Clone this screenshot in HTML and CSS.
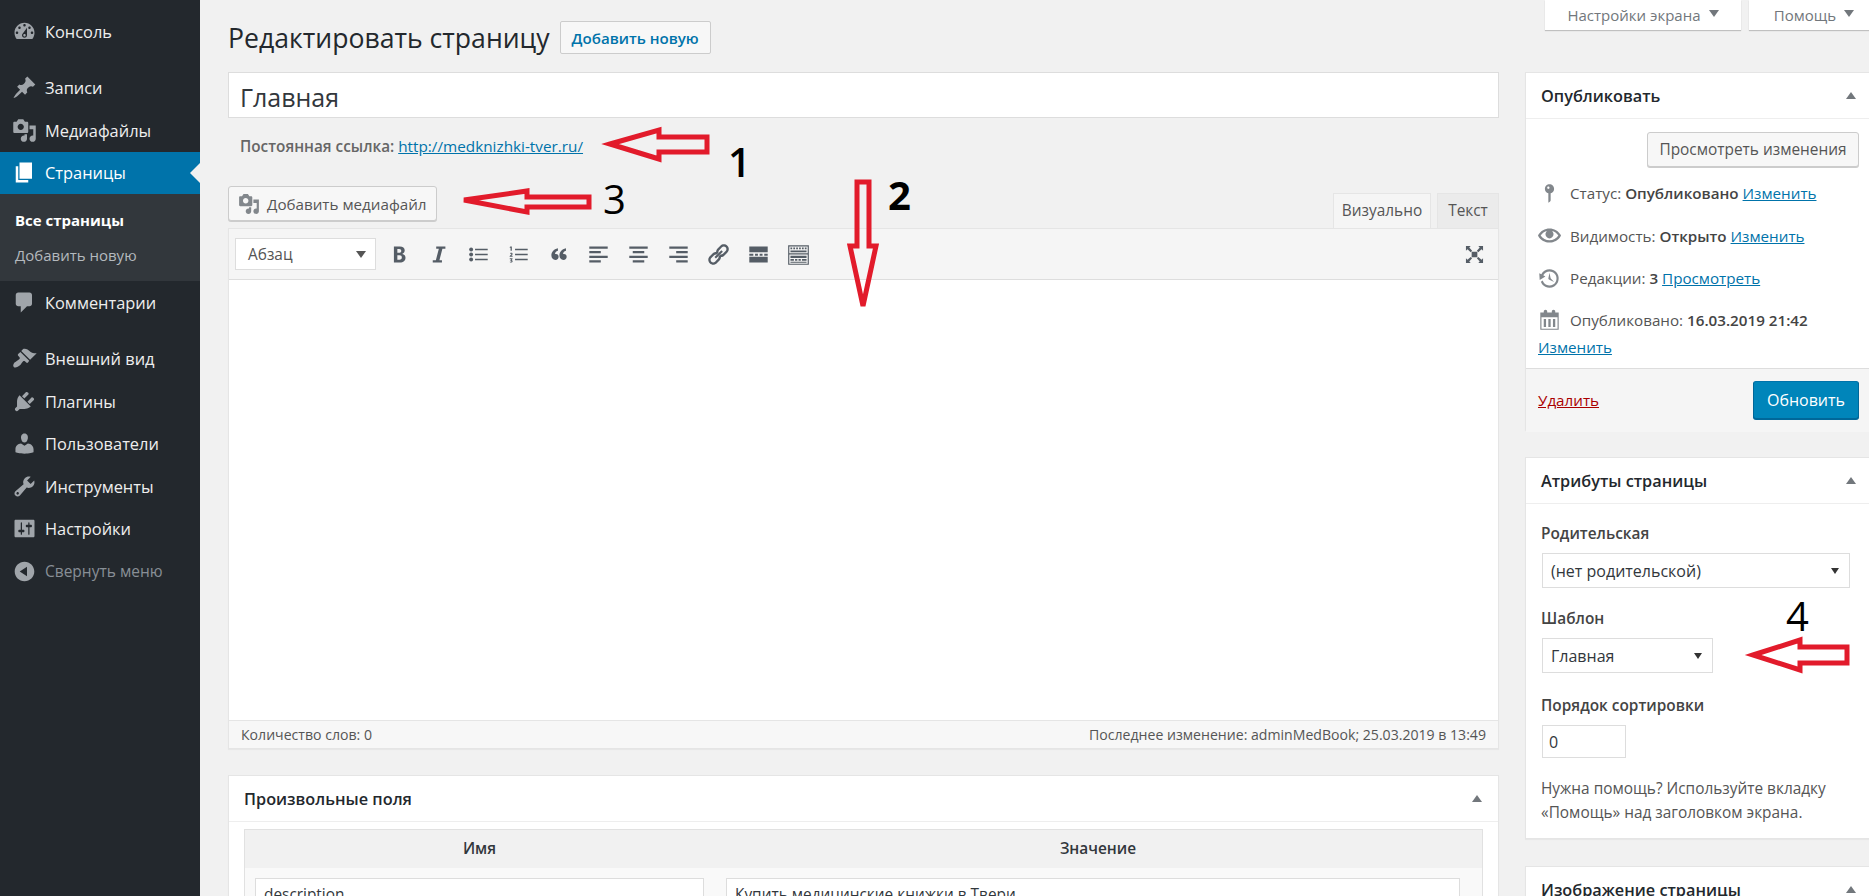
FILE: index.html
```html
<!DOCTYPE html>
<html lang="ru">

<head>
    <meta charset="UTF-8">
    <title>Редактировать страницу</title>
    <link rel="stylesheet" href="styles.css">
</head>

<body>
    <svg class="sprite" xmlns="http://www.w3.org/2000/svg">
        <symbol id="i-media" viewBox="0 0 20 20"><path d="M13 11V4c0-.55-.45-1-1-1h-1.67L9 1H5L3.67 3H2c-.55 0-1 .45-1 1v7c0 .55.45 1 1 1h10c.55 0 1-.45 1-1zM7 4.5c1.38 0 2.5 1.12 2.5 2.5S8.38 9.5 7 9.5 4.5 8.38 4.5 7 5.62 4.5 7 4.5zM14 6h5v10.5c0 1.38-1.12 2.5-2.5 2.5S14 17.88 14 16.5s1.12-2.5 2.5-2.5c.17 0 .34.02.5.05V9h-3V6zm-4 8.05V13h2v3.5c0 1.38-1.12 2.5-2.5 2.5S7 17.88 7 16.5 8.12 14 9.5 14c.17 0 .34.02.5.05z"/></symbol>
    </svg>

    <div class="page">
        <nav class="sidebar">
            <a class="menu-item"><svg class="menu-icon" viewBox="0 0 20 20"><path d="M3.76 16h12.48c1.1-1.37 1.76-3.11 1.76-5 0-4.42-3.58-8-8-8s-8 3.58-8 8c0 1.89.66 3.63 1.76 5zM10 4c.55 0 1 .45 1 1s-.45 1-1 1-1-.45-1-1 .45-1 1-1zM6 6c.55 0 1 .45 1 1s-.45 1-1 1-1-.45-1-1 .45-1 1-1zm8 0c.55 0 1 .45 1 1s-.45 1-1 1-1-.45-1-1 .45-1 1-1zm-5.37 5.55L12 7v6c0 1.1-.9 2-2 2s-2-.9-2-2c0-.57.24-1.08.63-1.45zM4 10c.55 0 1 .45 1 1s-.45 1-1 1-1-.45-1-1 .45-1 1-1zm12 0c.55 0 1 .45 1 1s-.45 1-1 1-1-.45-1-1 .45-1 1-1zm-5 3c0-.55-.45-1-1-1s-1 .45-1 1 .45 1 1 1 1-.45 1-1z"/></svg>Консоль</a>
            <a class="menu-item after-sep"><svg class="menu-icon" viewBox="0 0 20 20"><path d="M10.44 3.02l1.82-1.82 6.36 6.35-1.83 1.82c-1.05-.68-2.48-.57-3.41.36l-.75.75c-.92.93-1.04 2.35-.35 3.41l-1.83 1.82-2.41-2.41-2.8 2.79c-.42.42-3.38 2.71-3.8 2.29s1.86-3.39 2.28-3.81l2.79-2.79L4.1 9.36l1.83-1.82c1.05.69 2.48.57 3.4-.36l.75-.75c.93-.92 1.05-2.35.36-3.41z"/></svg>Записи</a>
            <a class="menu-item"><svg class="menu-icon"><use href="#i-media"/></svg>Медиафайлы</a>
            <a class="menu-item current"><svg class="menu-icon" viewBox="0 0 20 20"><path d="M6 15V2h10v13H6zm-1 1h8v2H3V5h2v11z"/></svg>Страницы</a>
            <div class="submenu">
                <a class="sub-item active">Все страницы</a>
                <a class="sub-item">Добавить новую</a>
            </div>
            <a class="menu-item"><svg class="menu-icon" viewBox="0 0 20 20"><path d="M5 2h9c1.1 0 2 .9 2 2v7c0 1.1-.9 2-2 2h-2l-5 5v-5H5c-1.1 0-2-.9-2-2V4c0-1.1.9-2 2-2z"/></svg>Комментарии</a>
            <a class="menu-item after-sep"><svg class="menu-icon" viewBox="0 0 20 20"><path d="M14.48 11.06L7.41 3.99l1.5-1.5c.5-.56 2.3-.47 3.51.32 1.21.8 1.43 1.28 2.91 2.1 1.18.64 2.45 1.26 4.45.85zm-.71.71L6.7 4.7 4.93 6.47c-.39.39-.39 1.02 0 1.41l1.06 1.06c.39.39.39 1.03 0 1.42-.6.6-1.43 1.11-2.21 1.69-.35.26-.7.53-1.01.84C1.43 13.23.4 15.8 1.43 16.83s3.6-.03 4.95-1.37c.31-.31.58-.66.85-1.02.57-.78 1.08-1.61 1.69-2.21.39-.39 1.02-.39 1.41 0l1.06 1.06c.39.39 1.02.39 1.41 0z"/></svg>Внешний вид</a>
            <a class="menu-item"><svg class="menu-icon" viewBox="0 0 20 20"><path d="M13.11 4.36L9.87 7.6 8 5.73l3.24-3.24c.35-.34 1.05-.2 1.56.32.52.51.66 1.21.31 1.55zm-8 1.77l.91-1.12 9.01 9.01-1.19.84c-.71.71-2.63 1.16-3.82 1.16H6.14L4.9 17.26c-.59.59-1.54.59-2.12 0-.59-.58-.59-1.53 0-2.12l1.24-1.24v-3.88c0-1.13.4-3.19 1.09-3.89zm7.26 3.97l3.24-3.24c.34-.35 1.04-.21 1.55.31.52.51.66 1.21.31 1.55l-3.24 3.25z"/></svg>Плагины</a>
            <a class="menu-item"><svg class="menu-icon" viewBox="0 0 20 20"><path d="M10 9.25c-2.27 0-2.73-3.44-2.73-3.44C7 4.02 7.82 2 9.97 2c2.16 0 2.98 2.02 2.71 3.81 0 0-.41 3.44-2.68 3.44zm0 2.57L12.72 10c2.39 0 4.52 2.33 4.52 4.53v2.49s-3.65 1.13-7.24 1.13c-3.65 0-7.24-1.13-7.24-1.13v-2.49c0-2.25 1.94-4.48 4.47-4.48z"/></svg>Пользователи</a>
            <a class="menu-item"><svg class="menu-icon" viewBox="0 0 20 20"><path d="M16.68 9.77c-1.34 1.34-3.3 1.67-4.95.99l-5.41 6.52c-.99.99-2.59.99-3.58 0s-.99-2.59 0-3.57l6.52-5.42c-.68-1.65-.35-3.61.99-4.95 1.28-1.28 3.12-1.62 4.72-1.06l-2.89 2.89 2.82 2.82 2.86-2.87c.53 1.58.18 3.39-1.08 4.67zM3.81 16.21c.4.39 1.04.39 1.43 0 .4-.4.4-1.04 0-1.43-.39-.4-1.03-.4-1.43 0-.39.39-.39 1.03 0 1.43z"/></svg>Инструменты</a>
            <a class="menu-item"><svg class="menu-icon" viewBox="0 0 20 20"><path d="M18 16V4c0-.55-.45-1-1-1H3c-.55 0-1 .45-1 1v12c0 .55.45 1 1 1h14c.55 0 1-.45 1-1zM8 11h1c.55 0 1 .45 1 1s-.45 1-1 1H8v1.5c0 .28-.22.5-.5.5s-.5-.22-.5-.5V13H6c-.55 0-1-.45-1-1s.45-1 1-1h1V5.5c0-.28.22-.5.5-.5s.5.22.5.5V11zm5-2h-1c-.55 0-1-.45-1-1s.45-1 1-1h1V5.5c0-.28.22-.5.5-.5s.5.22.5.5V7h1c.55 0 1 .45 1 1s-.45 1-1 1h-1v5.5c0 .28-.22.5-.5.5s-.5-.22-.5-.5V9z"/></svg>Настройки</a>
            <a class="menu-item collapse"><svg class="menu-icon" viewBox="0 0 20 20"><path d="M10 2.16c4.33 0 7.84 3.51 7.84 7.84s-3.51 7.84-7.84 7.84S2.16 14.33 2.16 10 5.71 2.16 10 2.16zm2 11.72V6.12L6.18 9.97z"/></svg>Свернуть меню</a>
        </nav>

        <main class="content">
            <div class="head">
                <h1>Редактировать страницу</h1>
                <a class="add-new">Добавить новую</a>
                <div class="screen-tabs">
                    <div class="screen-tab wide">Настройки экрана <span class="tab-caret"></span></div>
                    <div class="screen-tab">Помощь <span class="tab-caret"></span></div>
                </div>
            </div>

            <div class="columns">
                <div class="main-col">
                    <input class="title-input" type="text" value="Главная">
                    <div class="permalink"><b>Постоянная ссылка:</b> <a>http://medknizhki-tver.ru/</a></div>

                    <div class="editor-tools">
                        <button class="btn media-btn"><svg class="btn-icon"><use href="#i-media"/></svg>Добавить медиафайл</button>
                        <div class="editor-tabs">
                            <span class="editor-tab active">Визуально</span>
                            <span class="editor-tab">Текст</span>
                        </div>
                    </div>

                    <div class="editor">
                        <div class="toolbar">
                            <div class="format-select">Абзац <span class="format-caret"></span></div>
                            <div class="tool-group">
                                <svg class="tool" viewBox="0 0 20 20"><path d="M6 3h5.2c2.6 0 4.2 1.3 4.2 3.4 0 1.5-.8 2.6-2.2 3.1 1.8.4 2.9 1.6 2.9 3.4 0 2.5-1.9 4.1-4.9 4.1H6V3zm3 2.3v3.2h1.6c1.1 0 1.8-.6 1.8-1.6s-.7-1.6-1.8-1.6H9zm0 5.4v3.8h1.9c1.3 0 2-.7 2-1.9s-.7-1.9-2-1.9H9z"/></svg>
                                <svg class="tool" viewBox="0 0 20 20"><path d="M8 3h8v2h-2.6l-2.6 10H13v2H5v-2h2.7L10.3 5H8V3z"/></svg>
                                <svg class="tool" viewBox="0 0 20 20"><path d="M7 5h11v1.4H7V5zm0 4.3h11v1.4H7V9.3zm0 4.3h11V15H7v-1.4z"/><circle cx="3.6" cy="5.7" r="1.7"/><circle cx="3.6" cy="10" r="1.7"/><circle cx="3.6" cy="14.3" r="1.7"/></svg>
                                <svg class="tool" viewBox="0 0 20 20"><path d="M7 5h11v1.4H7V5zm0 4.3h11v1.4H7V9.3zm0 4.3h11V15H7v-1.4zM3 3h1.2v3.8H3.1V4.1H2.4V3.4L3 3zM2.3 11.6c0-.2.1-.4.3-.6l1-.9c.2-.2.3-.3.3-.5s-.2-.3-.4-.3-.5.1-.7.3v-.9c.2-.2.5-.3.9-.3.7 0 1.2.4 1.2 1.1 0 .4-.2.7-.5 1l-.6.5h1.1v.9H2.3v-.3zM2.4 13.3h2.4v.7l-.8.8c.6.1.9.5.9 1 0 .7-.6 1.2-1.4 1.2-.4 0-.8-.1-1-.2v-.8c.3.1.6.2.9.2s.5-.1.5-.3-.2-.3-.6-.3h-.3v-.7l.7-.8H2.4v-.8z"/></svg>
                                <svg class="tool" viewBox="0 0 20 20"><path d="M9.5 4.5v2.2C7.8 7.2 7 8.3 7 9.6c.3-.1.6-.1.9-.1 1.3 0 2.2 1 2.2 2.5 0 1.6-1.1 2.7-2.8 2.7-2.1 0-3.5-1.6-3.5-4 0-2.9 2-5.3 5.7-6.2zm7 0v2.2c-1.7.5-2.5 1.6-2.5 2.9.3-.1.6-.1.9-.1 1.3 0 2.2 1 2.2 2.5 0 1.6-1.1 2.7-2.8 2.7-2.1 0-3.5-1.6-3.5-4 0-2.9 2-5.3 5.7-6.2z"/></svg>
                                <svg class="tool" viewBox="0 0 20 20"><path d="M2 3h16v2H2V3zm0 4h10v2H2V7zm0 4h16v2H2v-2zm0 4h10v2H2v-2z"/></svg>
                                <svg class="tool" viewBox="0 0 20 20"><path d="M2 3h16v2H2V3zm3 4h10v2H5V7zm-3 4h16v2H2v-2zm3 4h10v2H5v-2z"/></svg>
                                <svg class="tool" viewBox="0 0 20 20"><path d="M2 3h16v2H2V3zm6 4h10v2H8V7zm-6 4h16v2H2v-2zm6 4h10v2H8v-2z"/></svg>
                                <svg class="tool" viewBox="0 0 20 20"><path d="M17.7 2.3c-1.7-1.7-4.4-1.7-6.1 0L9.2 4.7c-1.4 1.4-1.7 3.5-.7 5.2l1.5-1.5c-.2-.8 0-1.6.6-2.2l2.4-2.4c.9-.9 2.3-.9 3.2 0s.9 2.3 0 3.2l-2.4 2.4c-.5.5-1.3.7-2 .6l-1.6 1.6c1.7.9 3.7.6 5-.8l2.4-2.4c1.8-1.7 1.8-4.4.1-6.1zM10 11.6c.2.8 0 1.6-.6 2.2L7 16.2c-.9.9-2.3.9-3.2 0s-.9-2.3 0-3.2l2.4-2.4c.5-.5 1.3-.7 2-.6l1.6-1.6c-1.7-.9-3.7-.6-5 .8l-2.4 2.4c-1.7 1.7-1.7 4.4 0 6.1s4.4 1.7 6.1 0l2.4-2.4c1.4-1.4 1.7-3.5.7-5.2L10 11.6z"/><path d="M6.5 12.2l6-6 1.3 1.3-6 6z"/></svg>
                                <svg class="tool" viewBox="0 0 20 20"><path d="M2 3h16v5H2V3zm0 9h16v5H2v-5zm0-2.600h3.500V11H2V9.400zm5 0h2.500V11H7V9.400zm4 0h2.500V11H11V9.400zm4 0h3V11h-3V9.400z"/></svg>
                                <svg class="tool" viewBox="0 0 20 20"><path d="M1 2h18v17H1V2zm1 1v6h16V3H2zm0 7v8h16v-8H2zm1-6h1.500v1.500H3V4zm2.500 0H7v1.500H5.500V4zM8 4h1.500v1.500H8V4zm2.500 0H12v1.500h-1.500V4zM13 4h1.500v1.500H13V4zm2.500 0H17v1.500h-1.500V4zM3 6.500h14V8H3V6.500zM3 11h14v2H3v-2zm0 3h3v1.500H3V14zm4 0h2v1.500H7V14zm3 0h2v1.500h-2V14zm3 0h4v1.500h-4V14zM3 16.200h14v1H3v-1z"/></svg>
                            </div>
                            <svg class="tool fullscreen" viewBox="0 0 20 20"><path d="M7 7h6v6H7V7zM1 1h5L4.500 2.600 7.500 6 6 7.500 2.600 4.500 1 6V1zm18 0v5l-1.600-1.500L14 7.500 12.500 6l3-3.400L14 1h5zM1 19v-5l1.600 1.500L6 12.500 7.500 14l-3 3.400L6 19H1zm18 0h-5l1.500-1.600-3-3.400L14 12.500l3.400 3L19 14v5z"/></svg>
                        </div>
                        <div class="editor-area"></div>
                        <div class="status-bar">
                            <span>Количество слов: 0</span>
                            <span>Последнее изменение: adminMedBook; 25.03.2019 в 13:49</span>
                        </div>
                    </div>

                    <section class="box fields-box">
                        <div class="box-head"><h2>Произвольные поля</h2><span class="box-caret"></span></div>
                        <div class="fields-table">
                            <div class="fields-head">
                                <b class="col-name">Имя</b>
                                <b class="col-value">Значение</b>
                            </div>
                            <div class="fields-row">
                                <input class="col-name" type="text" value="description">
                                <input class="col-value" type="text" value="Купить медицинские книжки в Твери">
                            </div>
                        </div>
                    </section>
                </div>

                <aside class="side-col">
                    <section class="box publish-box">
                        <div class="box-head"><h2>Опубликовать</h2><span class="box-caret"></span></div>
                        <div class="preview-line"><button class="btn preview-btn">Просмотреть изменения</button></div>
                        <div class="pub-row">
                            <svg class="pub-icon" viewBox="0 0 20 20"><path d="M14 6c0 1.860-1.280 3.410-3 3.860V16c0 1-2 2-2 2V9.860c-1.720-.45-3-2-3-3.860 0-2.210 1.790-4 4-4s4 1.790 4 4zM8 5c0 .55.45 1 1 1s1-.45 1-1-.45-1-1-1-1 .45-1 1z"/></svg>
                            <span>Статус: <b>Опубликовано</b> <a>Изменить</a></span>
                        </div>
                        <div class="pub-row">
                            <svg class="pub-icon" viewBox="0 0 20 20"><path d="M19.700 9.400C17.700 6 14 3.900 10 3.900S2.300 6 .3 9.400L0 10l.3.6c2 3.400 5.700 5.500 9.700 5.500s7.700-2.100 9.700-5.500l.3-.6-.3-.6zM10 14.100c-3.100 0-6-1.600-7.700-4.100C3.600 8 5.700 6.600 8 6.100c-.9.6-1.500 1.700-1.500 2.900 0 1.900 1.600 3.500 3.500 3.500s3.500-1.600 3.500-3.500c0-1.200-.6-2.300-1.500-2.900 2.300.5 4.400 1.900 5.700 3.900-1.700 2.500-4.600 4.100-7.700 4.100z"/></svg>
                            <span>Видимость: <b>Открыто</b> <a>Изменить</a></span>
                        </div>
                        <div class="pub-row">
                            <svg class="pub-icon" viewBox="0 0 20 20"><path d="M13.650 2.880c3.930 2.010 5.480 6.840 3.470 10.770s-6.830 5.480-10.770 3.470c-1.870-.96-3.200-2.560-3.860-4.400l1.640-1.030c.45 1.570 1.520 2.950 3.080 3.760 3.010 1.540 6.690.35 8.230-2.660 1.550-3.010.36-6.690-2.650-8.240C9.780 3.010 6.100 4.200 4.560 7.210l1.880.97-4.950 3.080-.39-5.820 1.780.91C4.900 2.400 9.750.89 13.650 2.880zm-4.360 7.830C9.110 10.530 9 10.280 9 10c0-.07.03-.12.04-.19h-.01L10 5l.97 4.810L14 13l-4.500-2.120.02-.02c-.08-.04-.16-.09-.23-.15z"/></svg>
                            <span>Редакции: <b>3</b> <a>Просмотреть</a></span>
                        </div>
                        <div class="pub-row date-row">
                            <svg class="pub-icon" viewBox="0 0 20 20"><path d="M15 4h3v15H2V4h3V3c0-.41.15-.76.44-1.060.29-.29.65-.44 1.060-.44s.77.15 1.060.44c.29.3.44.65.44 1.060v1h4V3c0-.41.15-.76.44-1.060.29-.29.65-.44 1.060-.44s.77.15 1.060.44c.29.3.44.65.44 1.060v1zM3 8v10h14V8H3zm2 1.500h2v7H5v-7zm4 0h2v7H9v-7zm4 0h2v7h-2v-7z"/></svg>
                            <span>Опубликовано: <b>16.03.2019 21:42</b></span>
                        </div>
                        <a class="date-edit">Изменить</a>
                        <div class="pub-actions">
                            <a class="delete-link">Удалить</a>
                            <button class="btn update-btn">Обновить</button>
                        </div>
                    </section>

                    <section class="box attrs-box">
                        <div class="box-head"><h2>Атрибуты страницы</h2><span class="box-caret"></span></div>
                        <div class="attrs-body">
                            <p class="attr-label">Родительская</p>
                            <div class="select parent-select">(нет родительской)<span class="select-caret"></span></div>
                            <p class="attr-label">Шаблон</p>
                            <div class="select template-select">Главная<span class="select-caret"></span></div>
                            <p class="attr-label">Порядок сортировки</p>
                            <input class="order-input" type="text" value="0">
                            <p class="attr-help">Нужна помощь? Используйте вкладку «Помощь» над заголовком экрана.</p>
                        </div>
                    </section>

                    <section class="box">
                        <div class="box-head"><h2>Изображение страницы</h2><span class="box-caret"></span></div>
                    </section>
                </aside>
            </div>
        </main>
    </div>

    <!-- пометки поверх скриншота -->
    <svg class="marks" viewBox="0 0 1869 896" xmlns="http://www.w3.org/2000/svg">
        <g class="arrow">
            <path d="M610 144 659 130V137H707V152H659V159Z"/>
            <path d="M464 200 527 191V197H589V207H527V212Z"/>
            <path d="M863 306 850 246H857V182H869V246H876Z"/>
            <path d="M1753 655 1800 640V647H1847V663H1800V670Z"/>
        </g>
        <text class="mark-num semi" x="728" y="177">1</text>
        <text class="mark-num bold" x="888" y="210">2</text>
        <text class="mark-num" x="603" y="214">3</text>
        <text class="mark-num" x="1786" y="631">4</text>
    </svg>
</body>

</html>
```

FILE: styles.css
```css
html,
body {
    margin: 0;
    padding: 0;
    height: 896px;
    overflow: hidden;
}

body {
    position: relative;
    background: #f1f1f1;
    font-family: "Open Sans", sans-serif;
    font-size: 16px;
    color: #444;
}

a {
    color: #0073aa;
}

.sprite {
    display: none;
}

.page {
    display: flex;
    height: 896px;
}

/* sidebar */
.sidebar {
    flex: 0 0 200px;
    width: 200px;
    padding-top: 10px;
    background: #23282d;
    box-sizing: border-box;
}

.menu-item {
    display: flex;
    align-items: center;
    height: 42.5px;
    padding-left: 12px;
    font-size: 16.4px;
    color: #eee;
    box-sizing: border-box;
}

.menu-item.after-sep {
    margin-top: 14px;
}

.menu-icon {
    flex: 0 0 25px;
    width: 25px;
    height: 25px;
    margin-right: 8px;
    fill: #a0a5aa;
}

.menu-item.current {
    position: relative;
    background: #0073aa;
    color: #fff;
}

.menu-item.current .menu-icon {
    fill: #fff;
}

.menu-item.current::after {
    content: "";
    position: absolute;
    right: 0;
    top: 11px;
    border: 10px solid transparent;
    border-right-color: #f1f1f1;
    border-left: 0;
}

.menu-item.collapse {
    font-size: 15.5px;
    color: #888f96;
}

.submenu {
    height: 87px;
    padding-top: 9px;
    background: #32373c;
    box-sizing: border-box;
}

.sub-item {
    display: block;
    height: 35px;
    padding-left: 15px;
    font-size: 15px;
    line-height: 35px;
    color: #b4b9be;
}

.sub-item.active {
    font-weight: 700;
    color: #fff;
}

/* content */
.content {
    flex: 1;
    min-width: 0;
    padding-left: 28px;
}

.head {
    display: flex;
    align-items: flex-start;
    height: 72px;
}

.head h1 {
    margin: 18px 0 0;
    font-size: 26.6px;
    font-weight: 400;
    line-height: 40px;
    color: #23282d;
}

.add-new {
    margin: 21px 0 0 10px;
    padding: 0 11px;
    height: 33px;
    line-height: 32px;
    font-size: 15.1px;
    font-weight: 600;
    border: 1px solid #ccc;
    border-radius: 2px;
    background: #f7f7f7;
    box-sizing: border-box;
}

.screen-tabs {
    display: flex;
    flex-shrink: 0;
    gap: 8px;
    margin-left: auto;
    margin-right: -10px;
}

.screen-tab {
    display: flex;
    align-items: center;
    justify-content: center;
    width: 196px;
    height: 30px;
    font-size: 15px;
    color: #72777c;
    background: #fff;
    box-shadow: 0 1px 1px rgba(0, 0, 0, 0.2);
}

.screen-tab:last-child {
    width: 130px;
}

.tab-caret {
    margin-left: 8px;
    margin-bottom: 4px;
    border: 5px solid transparent;
    border-top: 7px solid #72777c;
    border-bottom: 0;
}

.columns {
    display: grid;
    grid-template-columns: 1271px 350px;
    column-gap: 26px;
    align-items: start;
}

.title-input {
    display: block;
    width: 100%;
    height: 46px;
    padding: 4px 11px 0;
    font-family: inherit;
    font-size: 25px;
    color: #32373c;
    background: #fff;
    border: 1px solid #ddd;
    box-sizing: border-box;
    outline: 0;
}

.permalink {
    height: 26px;
    margin: 15px 0 0;
    padding-left: 12px;
    font-size: 15.3px;
    line-height: 26px;
    color: #666;
}

.permalink b {
    font-weight: 600;
}

.permalink a {
    text-decoration: underline;
}

.editor-tools {
    display: flex;
    justify-content: space-between;
    align-items: flex-end;
    height: 42px;
    margin-top: 27px;
}

.btn {
    font-family: inherit;
    color: #555;
    background: #f7f7f7;
    border: 1px solid #ccc;
    border-radius: 3px;
    box-shadow: 0 1px 0 #ccc;
    box-sizing: border-box;
}

.media-btn {
    display: flex;
    align-items: center;
    align-self: flex-start;
    width: 209px;
    height: 35px;
    padding: 0 9px;
    font-size: 15.2px;
    white-space: nowrap;
}

.btn-icon {
    flex: 0 0 22px;
    width: 22px;
    height: 22px;
    margin-right: 7px;
    fill: #82878c;
}

.editor-tabs {
    display: flex;
    gap: 6px;
}

.editor-tab {
    width: 62px;
    height: 35px;
    font-size: 15.4px;
    line-height: 34px;
    text-align: center;
    color: #555;
    background: #ebebeb;
    border: 1px solid #e5e5e5;
    border-bottom: 0;
    box-sizing: border-box;
}

.editor-tab.active {
    width: 98px;
    background: #f5f5f5;
}

.editor {
    border: 1px solid #e5e5e5;
    box-shadow: 0 1px 1px rgba(0, 0, 0, 0.04);
    box-sizing: border-box;
    background: #fff;
}

.toolbar {
    display: flex;
    align-items: center;
    height: 51px;
    padding: 0 14px 0 6px;
    background: #f5f5f5;
    border-bottom: 1px solid #ddd;
    box-sizing: border-box;
}

.format-select {
    display: flex;
    align-items: center;
    justify-content: space-between;
    width: 141px;
    height: 32px;
    padding: 0 9px 0 12px;
    font-size: 15.4px;
    color: #555;
    background: #fff;
    border: 1px solid #ddd;
    box-sizing: border-box;
}

.format-caret {
    border: 5px solid transparent;
    border-top: 7px solid #555;
    border-bottom: 0;
}

.tool-group {
    display: flex;
    gap: 17px;
    margin-left: 11px;
}

.tool {
    flex: 0 0 23px;
    width: 23px;
    height: 23px;
    fill: #555d66;
}

.tool.fullscreen {
    margin-left: auto;
    width: 19px;
    height: 19px;
    flex-basis: 19px;
}

.editor-area {
    height: 440px;
    background: #fff;
}

.status-bar {
    display: flex;
    justify-content: space-between;
    height: 28px;
    padding: 0 12px;
    font-size: 14.1px;
    line-height: 28px;
    color: #555;
    background: #f7f7f7;
    border-top: 1px solid #e5e5e5;
    box-sizing: border-box;
}

/* boxes */
.box {
    margin-bottom: 27px;
    background: #fff;
    border: 1px solid #e5e5e5;
    box-shadow: 0 1px 1px rgba(0, 0, 0, 0.04);
    box-sizing: border-box;
}

.box-head {
    display: flex;
    align-items: center;
    justify-content: space-between;
    height: 46px;
    padding: 0 11px 0 15px;
    border-bottom: 1px solid #eee;
    box-sizing: border-box;
}

.box-head h2 {
    margin: 0;
    font-size: 16.3px;
    font-weight: 600;
    color: #23282d;
}

.box-caret {
    border: 5px solid transparent;
    border-bottom: 7px solid #72777c;
    border-top: 0;
}

.side-col .box-caret {
    margin-right: 7px;
}

/* custom fields */
.fields-box {
    margin-top: 26px;
    height: 300px;
}

.fields-box .box-head {
    padding-right: 16px;
}

.fields-table {
    margin: 7px 15px 0;
    border: 1px solid #e1e1e1;
    background: #f9f9f9;
}

.fields-head {
    display: flex;
    gap: 22px;
    height: 38px;
    padding: 0 22px 0 10px;
    font-size: 15.4px;
    line-height: 38px;
    text-align: center;
    background: #f1f1f1;
    color: #32373c;
}

.fields-head b {
    font-weight: 600;
}

.fields-head .col-value {
    padding-left: 10px;
}

.col-name {
    flex: 0 0 449px;
    width: 449px;
}

.col-value {
    flex: 1;
    min-width: 0;
}

.fields-row {
    display: flex;
    gap: 22px;
    padding: 10px 22px 0 10px;
}

.fields-row input {
    height: 32px;
    padding: 0 8px;
    font-family: inherit;
    font-size: 15.4px;
    color: #32373c;
    background: #fff;
    border: 1px solid #ddd;
    box-sizing: border-box;
}

/* publish */
.publish-box {
    height: 358px;
}

.preview-line {
    display: flex;
    justify-content: flex-end;
    padding: 13px 15px 0 0;
}

.preview-btn {
    width: 212px;
    height: 35px;
    font-size: 15.4px;
    white-space: nowrap;
    padding: 0;
}

.pub-row {
    display: flex;
    align-items: center;
    height: 42.5px;
    padding-left: 12px;
    font-size: 15.2px;
    color: #555;
}

.preview-line + .pub-row {
    margin-top: 5px;
}

.pub-row b {
    font-weight: 600;
    color: #444;
}

.pub-row a,
.date-edit,
.delete-link {
    text-decoration: underline;
}

.pub-icon {
    flex: 0 0 23px;
    width: 23px;
    height: 23px;
    margin-right: 9px;
    fill: #82878c;
}

.date-row {
    height: 40px;
}

.date-edit {
    display: block;
    padding-left: 12px;
    font-size: 15.2px;
    line-height: 14px;
}

.pub-actions {
    display: flex;
    align-items: center;
    justify-content: space-between;
    height: 64px;
    margin-top: 14px;
    padding: 0 15px 0 12px;
    background: #f5f5f5;
    border-top: 1px solid #ddd;
    box-sizing: border-box;
}

.delete-link {
    font-size: 15.2px;
    color: #a00;
}

.update-btn {
    width: 106px;
    height: 38px;
    padding: 0;
    font-size: 16px;
    color: #fff;
    background: #0085ba;
    border-color: #0073aa #006799 #006799;
    box-shadow: 0 1px 0 #006799;
}

/* attributes */
.attrs-box {
    height: 382px;
}

.attrs-body {
    padding: 0 15px;
}

.attr-label {
    margin: 0;
    height: 24px;
    font-size: 15.4px;
    font-weight: 600;
    line-height: 24px;
    color: #444;
}

.attrs-body .attr-label:first-child {
    margin-top: 18px;
}

.select {
    display: flex;
    align-items: center;
    justify-content: space-between;
    height: 35px;
    margin: 7px 0 19px 1px;
    padding: 0 10px 0 8px;
    font-size: 16px;
    color: #32373c;
    background: #fff;
    border: 1px solid #ddd;
    box-sizing: border-box;
}

.parent-select {
    width: 308px;
}

.template-select {
    width: 171px;
    margin-bottom: 21px;
}

.select-caret {
    border: 4px solid transparent;
    border-top: 6px solid #333;
    border-bottom: 0;
}

.order-input {
    display: block;
    width: 84px;
    height: 33px;
    margin: 7px 0 0 1px;
    padding: 0 6px;
    font-family: inherit;
    font-size: 16px;
    color: #32373c;
    border: 1px solid #ddd;
    box-sizing: border-box;
}

.attr-help {
    margin: 19px 0 0;
    font-size: 15.4px;
    line-height: 24px;
    color: #555;
}

/* red arrows and numbers drawn over the page */
.marks {
    position: absolute;
    left: 0;
    top: 0;
    width: 1869px;
    height: 896px;
    pointer-events: none;
}

.arrow path {
    fill: none;
    stroke: #e21b2b;
    stroke-width: 5;
}

.mark-num {
    font-family: "Open Sans", sans-serif;
    font-size: 40px;
    fill: #000;
}

.mark-num.semi {
    font-weight: 600;
}

.mark-num.bold {
    font-weight: 700;
}
```
